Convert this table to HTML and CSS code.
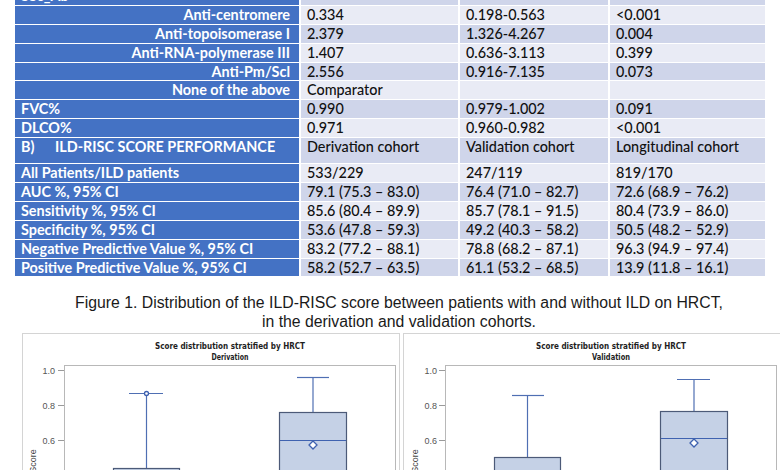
FILE: index.html
```html
<!DOCTYPE html>
<html>
<head>
<meta charset="utf-8">
<link rel="stylesheet" href="styles.css">
</head>
<body>
<div class="page">
  <div class="tbl">
    <div class="lbl">SSc_Ab</div><div class="v b"></div><div class="v b"></div><div class="v b"></div>

    <div class="lbl rt">Anti-centromere</div><div class="v a">0.334</div><div class="v a">0.198-0.563</div><div class="v a">&lt;0.001</div>
    <div class="lbl rt">Anti-topoisomerase I</div><div class="v b">2.379</div><div class="v b">1.326-4.267</div><div class="v b">0.004</div>
    <div class="lbl rt">Anti-RNA-polymerase III</div><div class="v a">1.407</div><div class="v a">0.636-3.113</div><div class="v a">0.399</div>
    <div class="lbl rt">Anti-Pm/Scl</div><div class="v b">2.556</div><div class="v b">0.916-7.135</div><div class="v b">0.073</div>
    <div class="lbl rt">None of the above</div><div class="v a">Comparator</div><div class="v a"></div><div class="v a"></div>
    <div class="lbl">FVC%</div><div class="v b">0.990</div><div class="v b">0.979-1.002</div><div class="v b">0.091</div>
    <div class="lbl">DLCO%</div><div class="v a">0.971</div><div class="v a">0.960-0.982</div><div class="v a">&lt;0.001</div>

    <div class="lbl top"><span class="sec">B)</span>ILD-RISC SCORE PERFORMANCE</div><div class="v b top">Derivation cohort</div><div class="v b top">Validation cohort</div><div class="v b top">Longitudinal cohort</div>

    <div class="lbl">All Patients/ILD patients</div><div class="v a">533/229</div><div class="v a">247/119</div><div class="v a">819/170</div>
    <div class="lbl">AUC %, 95% CI</div><div class="v b">79.1 (75.3 – 83.0)</div><div class="v b">76.4 (71.0 – 82.7)</div><div class="v b">72.6 (68.9 – 76.2)</div>
    <div class="lbl">Sensitivity %, 95% CI</div><div class="v a">85.6 (80.4 – 89.9)</div><div class="v a">85.7 (78.1 – 91.5)</div><div class="v a">80.4 (73.9 – 86.0)</div>
    <div class="lbl">Specificity %, 95% CI</div><div class="v b">53.6 (47.8 – 59.3)</div><div class="v b">49.2 (40.3 – 58.2)</div><div class="v b">50.5 (48.2 – 52.9)</div>
    <div class="lbl">Negative Predictive Value %, 95% CI</div><div class="v a">83.2 (77.2 – 88.1)</div><div class="v a">78.8 (68.2 – 87.1)</div><div class="v a">96.3 (94.9 – 97.4)</div>
    <div class="lbl">Positive Predictive Value %, 95% CI</div><div class="v b">58.2 (52.7 – 63.5)</div><div class="v b">61.1 (53.2 – 68.5)</div><div class="v b">13.9 (11.8 – 16.1)</div>
  </div>

  <p class="caption">Figure 1. Distribution of the ILD-RISC score between patients with and without ILD on HRCT,<br>in the derivation and validation cohorts.</p>

  <div class="charts">
    <div class="panel">
      <svg class="chart" width="376" height="200" viewBox="0 0 376 200">
        <text class="ttl" x="207" y="14.5" text-anchor="middle" textLength="150" lengthAdjust="spacingAndGlyphs">Score distribution stratified by HRCT</text>
        <text class="ttl" x="207" y="25.5" text-anchor="middle" textLength="37" lengthAdjust="spacingAndGlyphs">Derivation</text>
        <rect class="plot" x="41.5" y="31.5" width="331" height="180"/>
        <line class="tk" x1="35" y1="36.5" x2="41" y2="36.5"/>
        <line class="tk" x1="35" y1="71.5" x2="41" y2="71.5"/>
        <line class="tk" x1="35" y1="106.5" x2="41" y2="106.5"/>
        <line class="tk" x1="35" y1="141.5" x2="41" y2="141.5"/>
        <text class="tl" x="32" y="39.5" text-anchor="end">1.0</text>
        <text class="tl" x="32" y="74.5" text-anchor="end">0.8</text>
        <text class="tl" x="32" y="109.5" text-anchor="end">0.6</text>
        <text class="tl" x="32" y="144.5" text-anchor="end">0.4</text>
        <text class="yl" transform="translate(13,127) rotate(-90)" text-anchor="middle">Score</text>
        <line class="wh" x1="123.5" y1="134" x2="123.5" y2="59.5"/>
        <line class="wh" x1="106" y1="59.5" x2="140" y2="59.5"/>
        <circle class="mk" cx="123.5" cy="59.5" r="2"/>
        <rect class="box" x="90.5" y="134.5" width="66" height="80"/>
        <line class="wh" x1="290" y1="78" x2="290" y2="43.5"/>
        <line class="wh" x1="274" y1="43.5" x2="306" y2="43.5"/>
        <rect class="box" x="256.5" y="78.5" width="67" height="120"/>
        <line class="med" x1="257" y1="106.5" x2="323" y2="106.5"/>
        <polygon class="mk" points="290,107 294,111 290,115 286,111"/>
      </svg>
    </div>
    <div class="panel">
      <svg class="chart" width="376" height="200" viewBox="0 0 376 200">
        <text class="ttl" x="207" y="14.5" text-anchor="middle" textLength="150" lengthAdjust="spacingAndGlyphs">Score distribution stratified by HRCT</text>
        <text class="ttl" x="207" y="25.5" text-anchor="middle" textLength="38" lengthAdjust="spacingAndGlyphs">Validation</text>
        <rect class="plot" x="41.5" y="31.5" width="331" height="180"/>
        <line class="tk" x1="35" y1="36.5" x2="41" y2="36.5"/>
        <line class="tk" x1="35" y1="71.5" x2="41" y2="71.5"/>
        <line class="tk" x1="35" y1="106.5" x2="41" y2="106.5"/>
        <line class="tk" x1="35" y1="141.5" x2="41" y2="141.5"/>
        <text class="tl" x="33" y="39.5" text-anchor="end">1.0</text>
        <text class="tl" x="33" y="74.5" text-anchor="end">0.8</text>
        <text class="tl" x="33" y="109.5" text-anchor="end">0.6</text>
        <text class="tl" x="33" y="144.5" text-anchor="end">0.4</text>
        <text class="yl" transform="translate(14,127) rotate(-90)" text-anchor="middle">Score</text>
        <line class="wh" x1="123.5" y1="123" x2="123.5" y2="61.5"/>
        <line class="wh" x1="108" y1="61.5" x2="140" y2="61.5"/>
        <rect class="box" x="90.5" y="123.5" width="66" height="90"/>
        <line class="wh" x1="290" y1="77" x2="290" y2="45.5"/>
        <line class="wh" x1="273" y1="45.5" x2="306" y2="45.5"/>
        <rect class="box" x="256.5" y="77.5" width="67" height="120"/>
        <line class="med" x1="257" y1="104.5" x2="323" y2="104.5"/>
        <polygon class="mk" points="290,105 294,109 290,113 286,109"/>
      </svg>
    </div>
  </div>
</div>
</body>
</html>
```

FILE: styles.css
```css
html, body {
  margin: 0;
  padding: 0;
  background: #ffffff;
  overflow: hidden;
}

.page {
  width: 780px;
  height: 470px;
  overflow: hidden;
}

.tbl {
  display: grid;
  grid-template-columns: 284px 157px 148px 155px;
  grid-template-rows: repeat(8, 17.9px) 25px repeat(6, 17.9px);
  column-gap: 2px;
  row-gap: 1px;
  margin: -13px 0 0 15px;
  font-family: Lato, "Liberation Sans", sans-serif;
  font-size: 14.4px;
}

.lbl {
  background: #4472c4;
  color: #ffffff;
  font-weight: 700;
  padding: 0 6px;
  line-height: 17.9px;
  white-space: nowrap;
  overflow: hidden;
}

.lbl.rt {
  text-align: right;
  padding-right: 9px;
}

.sec {
  display: inline-block;
  width: 34px;
}

.v {
  color: #111111;
  font-weight: 500;
  padding: 0 6px;
  line-height: 17.9px;
  white-space: nowrap;
  overflow: hidden;
}

.v.a { background: #e9ebf5; }
.v.b { background: #cfd5ea; }

.caption {
  margin: 17px 0 0 18px;
  font-family: "Liberation Sans", Arial, sans-serif;
  font-size: 15.8px;
  line-height: 19px;
  color: #1a1a1a;
  text-align: center;
}

.charts {
  display: flex;
  gap: 3px;
  margin: 1.5px 0 0 22px;
}

.panel {
  border: 1px solid #d4d4d4;
  border-bottom: none;
  height: 200px;
  background: #ffffff;
}

.chart {
  display: block;
}

.ttl {
  font-family: "Liberation Sans Narrow", "DejaVu Sans Condensed", "Liberation Sans", sans-serif;
  font-weight: 700;
  font-size: 9.5px;
  fill: #1e1e1e;
}

.plot {
  fill: none;
  stroke: #b8b8b8;
  stroke-width: 1;
}

.tk {
  stroke: #9a9a9a;
  stroke-width: 1;
}

.tl {
  font-family: "Liberation Sans", Arial, sans-serif;
  font-size: 9px;
  fill: #555555;
}

.yl {
  font-family: "Liberation Sans", Arial, sans-serif;
  font-size: 9px;
  fill: #444444;
}

.wh {
  stroke: #4f6fb3;
  stroke-width: 1.2;
}

.med {
  stroke: #3f62b0;
  stroke-width: 1.2;
}

.box {
  fill: #c5d1e6;
  stroke: #4c5a78;
  stroke-width: 1.2;
}

.mk {
  fill: #ffffff;
  stroke: #3f62b0;
  stroke-width: 1.3;
}
```
